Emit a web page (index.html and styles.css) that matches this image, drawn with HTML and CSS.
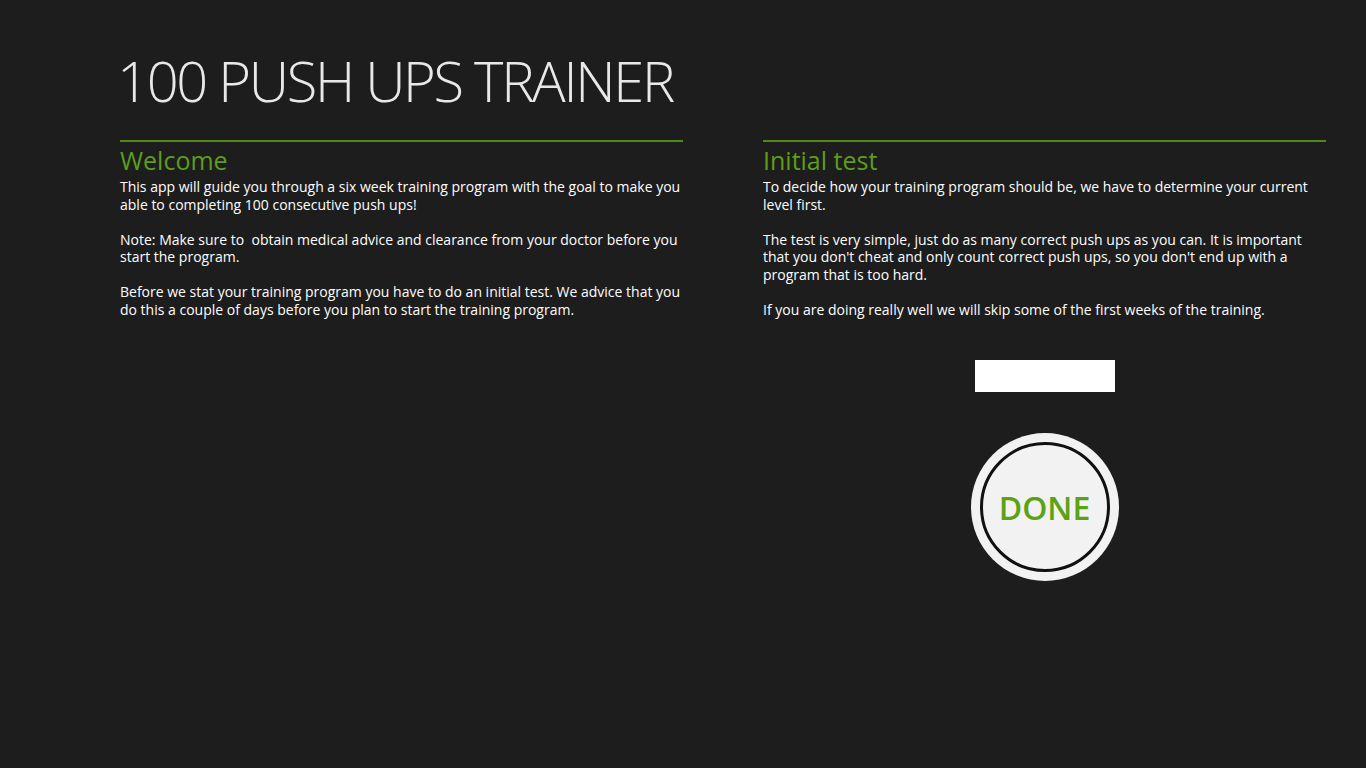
FILE: index.html
```html
<!DOCTYPE html>
<html lang="en">
<head>
<meta charset="utf-8">
<title>100 Push Ups Trainer</title>
<link rel="stylesheet" href="styles.css">
</head>
<body>
<div class="page">
  <h1 class="title">100 PUSH UPS TRAINER</h1>
  <div class="columns">
    <section class="col">
      <h2 class="heading">Welcome</h2>
      <p class="text">This app will guide you through a six week training program with the goal to make you able to completing 100 consecutive push ups!</p>
      <p class="text">Note: Make sure to&nbsp; obtain medical advice and clearance from your doctor before you start the program.</p>
      <p class="text">Before we stat your training program you have to do an initial test. We advice that you do this a couple of days before you plan to start the training program.</p>
    </section>
    <section class="col">
      <h2 class="heading">Initial test</h2>
      <p class="text">To decide how your training program should be, we have to determine your current level first.</p>
      <p class="text">The test is very simple, just do as many correct push ups as you can. It is important that you don't cheat and only count correct push ups, so you don't end up with a program that is too hard.</p>
      <p class="text">If you are doing really well we will skip some of the first weeks of the training.</p>
      <div class="test">
        <input class="count" type="text" aria-label="Push ups">
        <button class="done"><span class="ring">DONE</span></button>
      </div>
    </section>
  </div>
</div>
</body>
</html>
```
FILE: styles.css
```css
html, body {
  margin: 0;
  padding: 0;
  background: #1d1d1d;
  height: 100%;
}
body {
  font-family: "Open Sans", "Noto Sans", sans-serif;
  color: #ffffff;
}
.page {
  padding: 0 40px 0 120px;
}
.title {
  margin: 0 0 0 -3px;
  padding-top: 52px;
  height: 140px;
  box-sizing: border-box;
  font-family: "Open Sans", sans-serif;
  font-weight: 300;
  font-size: 56px;
  line-height: 56px;
  color: #e8e8e8;
  letter-spacing: -2.3px;
  white-space: nowrap;
}
.columns {
  display: grid;
  grid-template-columns: 563px 563px;
  column-gap: 80px;
}
.col {
  border-top: 2px solid #4f8b12;
}
.heading {
  margin: 2px 0 0;
  font-weight: 400;
  font-size: 25px;
  line-height: 32px;
  height: 34px;
  color: #5c9e1a;
}
.text {
  margin: 0 0 17.5px;
  font-size: 14px;
  line-height: 17.5px;
  color: #ffffff;
}
.text:last-of-type {
  margin-bottom: 0;
}
.test {
  display: flex;
  flex-direction: column;
  align-items: center;
  padding-top: 42px;
}
.count {
  width: 140px;
  height: 32px;
  box-sizing: border-box;
  border: none;
  background: #ffffff;
  margin: 0;
  padding: 0 8px;
}
.done {
  margin-top: 41px;
  width: 148px;
  height: 148px;
  border-radius: 50%;
  border: none;
  background: #f2f2f2;
  padding: 0;
  display: flex;
  align-items: center;
  justify-content: center;
}
.ring {
  width: 130px;
  height: 130px;
  box-sizing: border-box;
  border: 3px solid #111111;
  border-radius: 50%;
  display: flex;
  align-items: center;
  justify-content: center;
  font-family: "Open Sans", sans-serif;
  font-weight: 600;
  font-size: 32px;
  color: #5ba214;
}
```
